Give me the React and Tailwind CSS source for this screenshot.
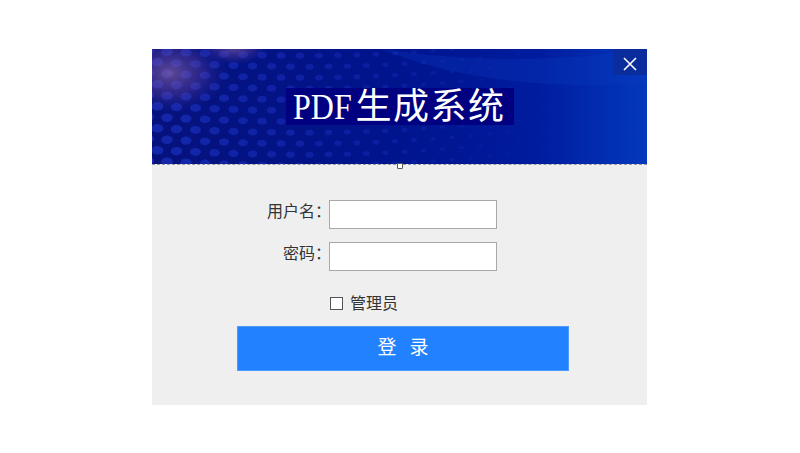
import { useMemo } from "react";

function HeaderArt() {
  // dot field: big at the left, fading out to the right
  const dots = useMemo(() => {
    const list = [];
    for (let row = 0; row < 12; row++) {
      for (let col = 0; col < 26; col++) {
        const x = col * 19 + (row % 2 ? 9.5 : 0) - 4;
        const y = row * 11 + 2 + 10 * Math.sin(x / 130) - x * 0.03;
        const fade = Math.max(0, 1 - x / 440);
        const r = 0.8 + fade * 5.2;
        list.push({ x, y, r, o: 0.06 + fade * 0.6 });
      }
    }
    return list;
  }, []);

  return (
    <svg className="absolute inset-0 h-full w-full" viewBox="0 0 495 115" preserveAspectRatio="none">
      <defs>
        <linearGradient id="bg" x1="0" y1="0" x2="1" y2="0">
          <stop offset="0" stopColor="#06127c" />
          <stop offset="0.5" stopColor="#00148e" />
          <stop offset="0.78" stopColor="#001c9e" />
          <stop offset="1" stopColor="#0338bd" />
        </linearGradient>
        <radialGradient id="glow" cx="0.5" cy="0.5" r="0.5">
          <stop offset="0" stopColor="#9a6fa6" stopOpacity="0.6" />
          <stop offset="0.55" stopColor="#6a459e" stopOpacity="0.35" />
          <stop offset="1" stopColor="#2a2a9e" stopOpacity="0" />
        </radialGradient>
      </defs>
      <rect width="495" height="115" fill="url(#bg)" />
      <path d="M230 0 C 320 14 420 12 495 0 L495 34 C 410 40 310 34 230 0 Z" fill="#0a3cc0" opacity="0.3" />
      {dots.map((d, i) => (
        <ellipse key={i} cx={d.x} cy={d.y} rx={d.r} ry={d.r * 0.72} fill="#1c32c4" opacity={d.o} />
      ))}
      <ellipse cx="18" cy="24" rx="58" ry="40" fill="url(#glow)" />
      <ellipse cx="82" cy="-2" rx="34" ry="18" fill="url(#glow)" />
    </svg>
  );
}

export default function App() {
  return (
    <div className="flex h-screen items-center justify-center bg-white pr-px pt-px font-['Liberation_Sans','Noto_Sans_CJK_SC',sans-serif]">
      <div className="flex h-[356px] w-[495px] flex-col bg-[#efefef]">
        <div className="relative flex h-[116px] shrink-0 items-start justify-center border-b border-dashed border-[#9a9a9a]">
          <HeaderArt />
          <button
            type="button"
            className="absolute right-0 top-0 flex h-[26px] w-[34px] items-center justify-center bg-[#0a2c9c] pt-[3px]"
          >
            <svg width="14" height="14" viewBox="0 0 14 14" fill="none" stroke="#ffffff" strokeWidth="1.6">
              <path d="M1 1 L13 13 M13 1 L1 13" />
            </svg>
          </button>
          <h1 className="relative mt-[39px] flex h-[37px] w-[228px] items-center gap-[4px] bg-[#000080] pl-[7px] font-['Liberation_Serif','Noto_Sans_CJK_SC',serif] text-[36px] font-normal leading-none text-white">
            <span className="inline-block w-[59px] origin-left scale-x-[0.89] whitespace-nowrap">PDF</span>
            <span className="tracking-[1.5px]">生成系统</span>
          </h1>
          <span className="absolute -bottom-[5px] left-[245px] h-[6px] w-[6px] rounded-[1px] border border-[#555555] bg-white" />
        </div>

        <div className="flex flex-col items-start">
          <div className="ml-[106px] mt-[35px] flex items-center">
            <label className="-mt-[6px] w-[71px] translate-x-[2px] text-right text-base leading-5 text-[#333333]">用户名：</label>
            <input type="text" className="h-[29px] w-[168px] border border-[#a8a8a8] bg-white outline-none" />
          </div>
          <div className="ml-[106px] mt-[13px] flex items-center">
            <label className="-mt-[5px] w-[71px] translate-x-[2px] text-right text-base leading-5 text-[#333333]">密码：</label>
            <input type="password" className="h-[29px] w-[168px] border border-[#a8a8a8] bg-white outline-none" />
          </div>
          <div className="ml-[178px] mt-[23px] flex items-center gap-[7px]">
            <span className="-mt-[2px] h-[13px] w-[13px] border border-[#555555] bg-white" />
            <span className="text-base leading-5 text-[#333333]">管理员</span>
          </div>
          <button
            type="button"
            className="ml-[85px] mt-[12px] flex h-[45px] w-[332px] items-center justify-center gap-[13px] border border-[#4d9bff] bg-[#2181ff] text-[19px] text-white"
          >
            <span>登</span>
            <span>录</span>
          </button>
        </div>
      </div>
    </div>
  );
}
